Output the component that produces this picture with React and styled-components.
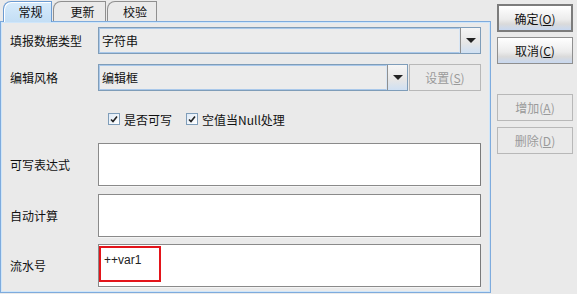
import React from 'react';
import styled, { createGlobalStyle } from 'styled-components';

const GlobalStyle = createGlobalStyle`
  html, body {
    margin: 0;
    padding: 0;
    background: #eaeaea;
  }
  body {
    font-family: "Noto Sans CJK SC", "DejaVu Sans", sans-serif;
    font-size: 12px;
    color: #111;
  }
`;

const Dialog = styled('div')`
  width: 577px;
  height: 294px;
  display: flex;
  background: #eaeaea;
  overflow: hidden;
`;

const LeftColumn = styled('div')`
  width: 491px;
  display: flex;
  flex-direction: column;
`;

const TabStrip = styled('div')`
  display: flex;
  align-items: flex-end;
  height: 22px;
  padding-left: 3px;
  gap: 1px;
`;

const Tab = styled('div')`
  position: relative;
  height: ${(p) => (p.selected ? 21 : 20)}px;
  width: ${(p) => p.width}px;
  box-sizing: border-box;
  display: flex;
  align-items: center;
  justify-content: center;
  padding-left: 6px;
  line-height: 1;
  border: 1px solid ${(p) => (p.selected ? '#6b9bd2' : '#8f8f8f')};
  border-bottom: none;
  border-top-left-radius: 8px 8px;
  background: ${(p) => (p.selected ? 'linear-gradient(#d7ebfb, #c3def5)' : '#eaeaea')};
  box-shadow: ${(p) => (p.selected ? 'inset 1px 1px 0 #ffffff' : 'none')};
  margin-bottom: ${(p) => (p.selected ? -1 : 0)}px;
  z-index: ${(p) => (p.selected ? 2 : 1)};
`;

const Panel = styled('div')`
  flex: 1;
  margin-bottom: 1px;
  border: 1px solid #7eabdd;
  box-shadow: inset 1px 1px 0 #cfe6fa, inset -1px -1px 0 #cfe6fa;
  box-sizing: border-box;
  padding: 5px 9px 5px 9px;
  display: flex;
  flex-direction: column;
`;

const FormRow = styled('div')`
  display: flex;
  align-items: ${(p) => (p.top ? 'center' : 'center')};
  height: ${(p) => p.height}px;
  margin-bottom: ${(p) => p.gap || 0}px;
`;

const Label = styled('div')`
  width: 88px;
  flex-shrink: 0;
  white-space: nowrap;
`;

const Combo = styled('div')`
  flex: ${(p) => (p.width ? 'none' : 1)};
  width: ${(p) => (p.width ? `${p.width}px` : 'auto')};
  height: 27px;
  box-sizing: border-box;
  border: 1px solid #7f9db9;
  display: flex;
  background: #ececec;
`;

const ComboValue = styled('div')`
  flex: 1;
  display: flex;
  align-items: center;
  padding-left: 2px;
  border: 1px solid #a9c8ea;
  border-right: 1px solid #d8e6f5;
`;

const ArrowButton = styled('div')`
  width: 19px;
  border-left: 1px solid #8f8f8f;
  background: linear-gradient(#f6f6f6 0%, #e6e6e6 60%, #cfe0f3 100%);
  display: flex;
  align-items: center;
  justify-content: center;
`;

const Arrow = styled('div')`
  width: 0;
  height: 0;
  border-left: 5px solid transparent;
  border-right: 5px solid transparent;
  border-top: 5px solid #222;
`;

const SetButton = styled('div')`
  width: 75px;
  height: 27px;
  box-sizing: border-box;
  margin-left: 1px;
  border: 1px solid #b8b8b8;
  color: #9a9a9a;
  display: flex;
  align-items: center;
  justify-content: center;
`;

const CheckRow = styled('div')`
  display: flex;
  align-items: center;
  height: 14px;
  padding-left: 98px;
  margin: 21px 0 17px;
  gap: 14px;
`;

const CheckItem = styled('label')`
  display: flex;
  align-items: center;
  gap: 4px;
  white-space: nowrap;
`;

const CheckBox = styled('span')`
  width: 12px;
  height: 12px;
  box-sizing: border-box;
  border: 1px solid #7f9db9;
  background: linear-gradient(135deg, #dfeaf6, #ffffff);
  display: inline-flex;
  align-items: center;
  justify-content: center;
`;

const TextBox = styled('div')`
  position: relative;
  flex: 1;
  height: ${(p) => p.height}px;
  box-sizing: border-box;
  border: 1px solid #8a8a8a;
  border-right-color: #7a7a7a;
  background: #ffffff;
  box-shadow: 0 1px 0 #f4f4f4;
`;

const Highlight = styled('div')`
  position: absolute;
  left: 0;
  top: 1px;
  width: 62px;
  height: 36px;
  box-sizing: border-box;
  border: 2px solid #e3141a;
  padding: 6px 0 0 3px;
  line-height: 12px;
  font-family: "Liberation Sans", "DejaVu Sans", sans-serif;
  font-size: 12px;
  color: #222;
`;

const RightColumn = styled('div')`
  width: 76px;
  margin-left: 6px;
  padding-top: 4px;
  display: flex;
  flex-direction: column;
`;

const ActionButton = styled('div')`
  height: ${(p) => (p.primary ? 28 : 27)}px;
  box-sizing: border-box;
  margin-bottom: ${(p) => p.gap || 0}px;
  border: ${(p) => (p.primary ? '2px solid #7c7c7c' : `1px solid ${p.disabled ? '#b8b8b8' : '#8f8f8f'}`)};
  background: ${(p) => (p.disabled ? '#eaeaea' : 'linear-gradient(#ffffff 0%, #ececec 55%, #dadada 75%, #c8d8f0 100%)')};
  color: ${(p) => (p.disabled ? '#9a9a9a' : '#111')};
  display: flex;
  align-items: center;
  justify-content: center;
  white-space: nowrap;
`;

const Mnemonic = styled('span')`
  text-decoration: underline;
`;

function Check () {
  return (
    <CheckBox>
      <svg width="8" height="8" viewBox="0 0 8 8">
        <path d="M1 4.5 L3 6.5 L7 1.5" stroke="#222" strokeWidth="1.6" fill="none" />
      </svg>
    </CheckBox>
  );
}

export default function App () {
  return (
    <Dialog>
      <GlobalStyle />
      <LeftColumn>
        <TabStrip>
          <Tab selected width={49}>常规</Tab>
          <Tab width={53}>更新</Tab>
          <Tab width={50}>校验</Tab>
        </TabStrip>
        <Panel>
          <FormRow height={27} gap={10}>
            <Label>填报数据类型</Label>
            <Combo>
              <ComboValue>字符串</ComboValue>
              <ArrowButton><Arrow /></ArrowButton>
            </Combo>
          </FormRow>
          <FormRow height={27}>
            <Label>编辑风格</Label>
            <Combo width={310}>
              <ComboValue>编辑框</ComboValue>
              <ArrowButton><Arrow /></ArrowButton>
            </Combo>
            <SetButton>设置(<Mnemonic>S</Mnemonic>)</SetButton>
          </FormRow>
          <CheckRow>
            <CheckItem><Check />是否可写</CheckItem>
            <CheckItem><Check />空值当Null处理</CheckItem>
          </CheckRow>
          <FormRow height={43} gap={8}>
            <Label>可写表达式</Label>
            <TextBox height={43} />
          </FormRow>
          <FormRow height={43} gap={7}>
            <Label>自动计算</Label>
            <TextBox height={43} />
          </FormRow>
          <FormRow height={43}>
            <Label>流水号</Label>
            <TextBox height={43}>
              <Highlight>++var1</Highlight>
            </TextBox>
          </FormRow>
        </Panel>
      </LeftColumn>
      <RightColumn>
        <ActionButton primary gap={5}>确定(<Mnemonic>O</Mnemonic>)</ActionButton>
        <ActionButton gap={30}>取消(<Mnemonic>C</Mnemonic>)</ActionButton>
        <ActionButton disabled gap={6}>增加(<Mnemonic>A</Mnemonic>)</ActionButton>
        <ActionButton disabled>删除(<Mnemonic>D</Mnemonic>)</ActionButton>
      </RightColumn>
    </Dialog>
  );
}
